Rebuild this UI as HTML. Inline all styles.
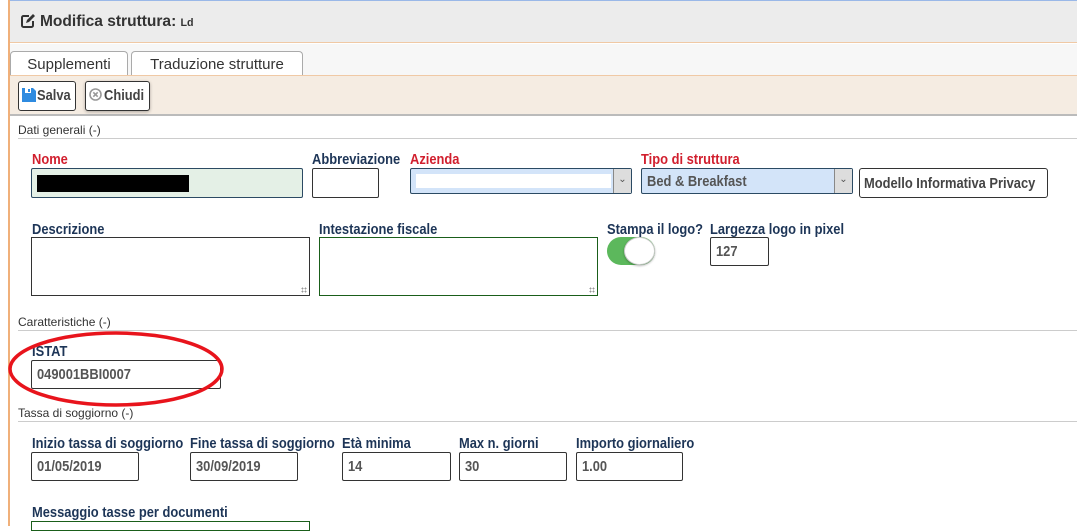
<!DOCTYPE html>
<html><head><meta charset="utf-8"><style>
*{box-sizing:border-box;margin:0;padding:0}
body{width:1077px;height:526px;overflow:hidden;background:#fff;font-family:"Liberation Sans",sans-serif;position:relative}
.a{position:absolute}
.lbl{position:absolute;font-weight:bold;font-size:15px;color:#1d3557;white-space:nowrap;transform:scaleX(.86);transform-origin:left}
.red{color:#d11f2e}
.in{position:absolute;border:1px solid #333;border-radius:2px;background:#fff;font-weight:bold;font-size:15px;color:#555;padding-left:5px;display:flex;align-items:center;white-space:nowrap}
.in span{display:inline-block;transform:scaleX(.86);transform-origin:left}
.sec{position:absolute;left:18px;right:0;font-size:12px;color:#333;border-bottom:1px solid #ccc;height:15px;line-height:12px}
.ta{position:absolute;border:1px solid #333;background:#fff}
.ta:after{content:"";position:absolute;right:2px;bottom:2px;width:6px;height:6px;background:radial-gradient(#999 0.8px,transparent 1px) 0 0/3px 3px}
</style></head><body>
<div class="a" style="left:8px;top:0;width:1069px;height:43px;background:#ececec;border-top:1px solid #9ab8e8;border-left:1px solid #9ab8e8;border-bottom:1px solid #f0c9a5"></div>
<div class="a" style="left:8px;top:0;width:2px;height:526px;background:#f0b07a"></div>
<svg class="a" style="left:20px;top:14px" width="15" height="15" viewBox="0 0 15 15"><path d="M9 2H3.5A1.5 1.5 0 0 0 2 3.5v8A1.5 1.5 0 0 0 3.5 13h8a1.5 1.5 0 0 0 1.5-1.5V7" fill="none" stroke="#333" stroke-width="2"/><path d="M6 9l1-3 6-6 2 2-6 6z" fill="#333"/></svg>
<div class="lbl" style="left:40px;top:13px;font-size:16px;color:#333;transform:scaleX(.97)">Modifica struttura: <span style="font-size:11px">Ld</span></div>
<div class="a" style="left:10px;top:44px;width:1067px;height:31px;background:#f7f7f7"></div>
<div class="a" style="left:10px;top:51px;width:118px;height:25px;border:1px solid #aaa;border-bottom:none;border-radius:4px 4px 0 0;background:#fff;font-size:15px;color:#333;text-align:center;line-height:26px">Supplementi</div>
<div class="a" style="left:131px;top:51px;width:172px;height:25px;border:1px solid #aaa;border-bottom:none;border-radius:4px 4px 0 0;background:#fff;font-size:15px;color:#333;text-align:center;line-height:26px">Traduzione strutture</div>
<div class="a" style="left:10px;top:75px;width:1067px;height:41px;background:#f5ece2;border-top:1px solid #f0c9a5;border-bottom:2px solid #bbb"></div>
<div class="a" style="left:18px;top:81px;width:58px;height:30px;border:1px solid #333;border-radius:3px;background:#fff"></div>
<div class="lbl" style="left:37px;top:87px;color:#444">Salva</div>
<svg class="a" style="left:22px;top:88px" width="14" height="14" viewBox="0 0 14 14"><path d="M0 0h11l3 3v11H0z" fill="#2e8be0"/><rect x="3" y="0" width="6" height="5" fill="#fff"/><rect x="6" y="1" width="2" height="3" fill="#2e8be0"/></svg>
<div class="a" style="left:85px;top:81px;width:65px;height:30px;border:1px solid #333;border-radius:3px;background:#fff;box-shadow:0 1px 3px rgba(0,0,0,.3)"></div>
<div class="lbl" style="left:104px;top:87px;color:#444">Chiudi</div>
<svg class="a" style="left:89px;top:88px" width="13" height="13" viewBox="0 0 13 13"><circle cx="6.5" cy="6.5" r="5.5" fill="none" stroke="#999" stroke-width="1.6"/><path d="M4.3 4.3l4.4 4.4M8.7 4.3l-4.4 4.4" stroke="#999" stroke-width="1.6"/></svg>

<div class="sec" style="top:124px">Dati generali (-)</div>
<div class="lbl red" style="left:32px;top:151px">Nome</div>
<div class="in" style="left:31px;top:168px;width:272px;height:30px;background:#e4f0e6;border-color:#2b4a63"><div style="width:152px;height:17px;background:#000"></div></div>
<div class="lbl" style="left:312px;top:151px">Abbreviazione</div>
<div class="in" style="left:312px;top:168px;width:67px;height:30px"></div>
<div class="lbl red" style="left:410px;top:151px">Azienda</div>
<div class="in" style="left:410px;top:168px;width:222px;height:26px;background:#d3e4f9;border-color:#2b4a63"><div style="width:195px;height:14px;background:#fff"></div></div>
<div class="a" style="left:613px;top:169px;width:18px;height:24px;background:#ddd;border-left:1px solid #888;color:#555;font-size:10px;text-align:center;line-height:22px">&#8964;</div>
<div class="lbl red" style="left:641px;top:151px">Tipo di struttura</div>
<div class="in" style="left:641px;top:168px;width:212px;height:26px;background:#d3e4f9;border-color:#2b4a63"><span>Bed &amp; Breakfast</span></div>
<div class="a" style="left:834px;top:169px;width:18px;height:24px;background:#ddd;border-left:1px solid #888;color:#555;font-size:10px;text-align:center;line-height:22px">&#8964;</div>
<div class="in" style="left:859px;top:168px;width:189px;height:30px;color:#444;border-radius:3px;padding-left:4px"><span>Modello Informativa Privacy</span></div>

<div class="lbl" style="left:32px;top:221px">Descrizione</div>
<div class="ta" style="left:31px;top:237px;width:279px;height:59px"></div>
<div class="lbl" style="left:319px;top:221px">Intestazione fiscale</div>
<div class="ta" style="left:319px;top:237px;width:279px;height:59px;border-color:#1a5e1a"></div>
<div class="lbl" style="left:607px;top:221px">Stampa il logo?</div>
<div class="a" style="left:607px;top:237px;width:48px;height:28px;border-radius:14px;background:#5cb85c"></div>
<div class="a" style="left:624px;top:237px;width:31px;height:28px;border-radius:50%;background:#fff;border:1px solid #ccc;box-shadow:0 1px 2px rgba(0,0,0,.3)"></div>
<div class="lbl" style="left:710px;top:221px">Largezza logo in pixel</div>
<div class="in" style="left:710px;top:237px;width:59px;height:29px"><span>127</span></div>

<div class="sec" style="top:316px">Caratteristiche (-)</div>
<div class="lbl" style="left:32px;top:343px">ISTAT</div>
<div class="in" style="left:31px;top:360px;width:190px;height:29px"><span>049001BBI0007</span></div>
<svg class="a" style="left:5px;top:330px" width="220" height="78"><ellipse cx="111" cy="39" rx="106" ry="36" fill="none" stroke="#e8141c" stroke-width="3.5"/></svg>

<div class="sec" style="top:407px">Tassa di soggiorno (-)</div>
<div class="lbl" style="left:32px;top:435px">Inizio tassa di soggiorno</div>
<div class="in" style="left:31px;top:452px;width:108px;height:29px"><span>01/05/2019</span></div>
<div class="lbl" style="left:190px;top:435px">Fine tassa di soggiorno</div>
<div class="in" style="left:190px;top:452px;width:108px;height:29px"><span>30/09/2019</span></div>
<div class="lbl" style="left:342px;top:435px">Età minima</div>
<div class="in" style="left:342px;top:452px;width:109px;height:29px"><span>14</span></div>
<div class="lbl" style="left:459px;top:435px">Max n. giorni</div>
<div class="in" style="left:459px;top:452px;width:108px;height:29px"><span>30</span></div>
<div class="lbl" style="left:576px;top:435px">Importo giornaliero</div>
<div class="in" style="left:576px;top:452px;width:107px;height:29px"><span>1.00</span></div>
<div class="lbl" style="left:32px;top:504px">Messaggio tasse per documenti</div>
<div class="a" style="left:31px;top:521px;width:279px;height:10px;border:1px solid #1a5e1a"></div>
</body></html>
